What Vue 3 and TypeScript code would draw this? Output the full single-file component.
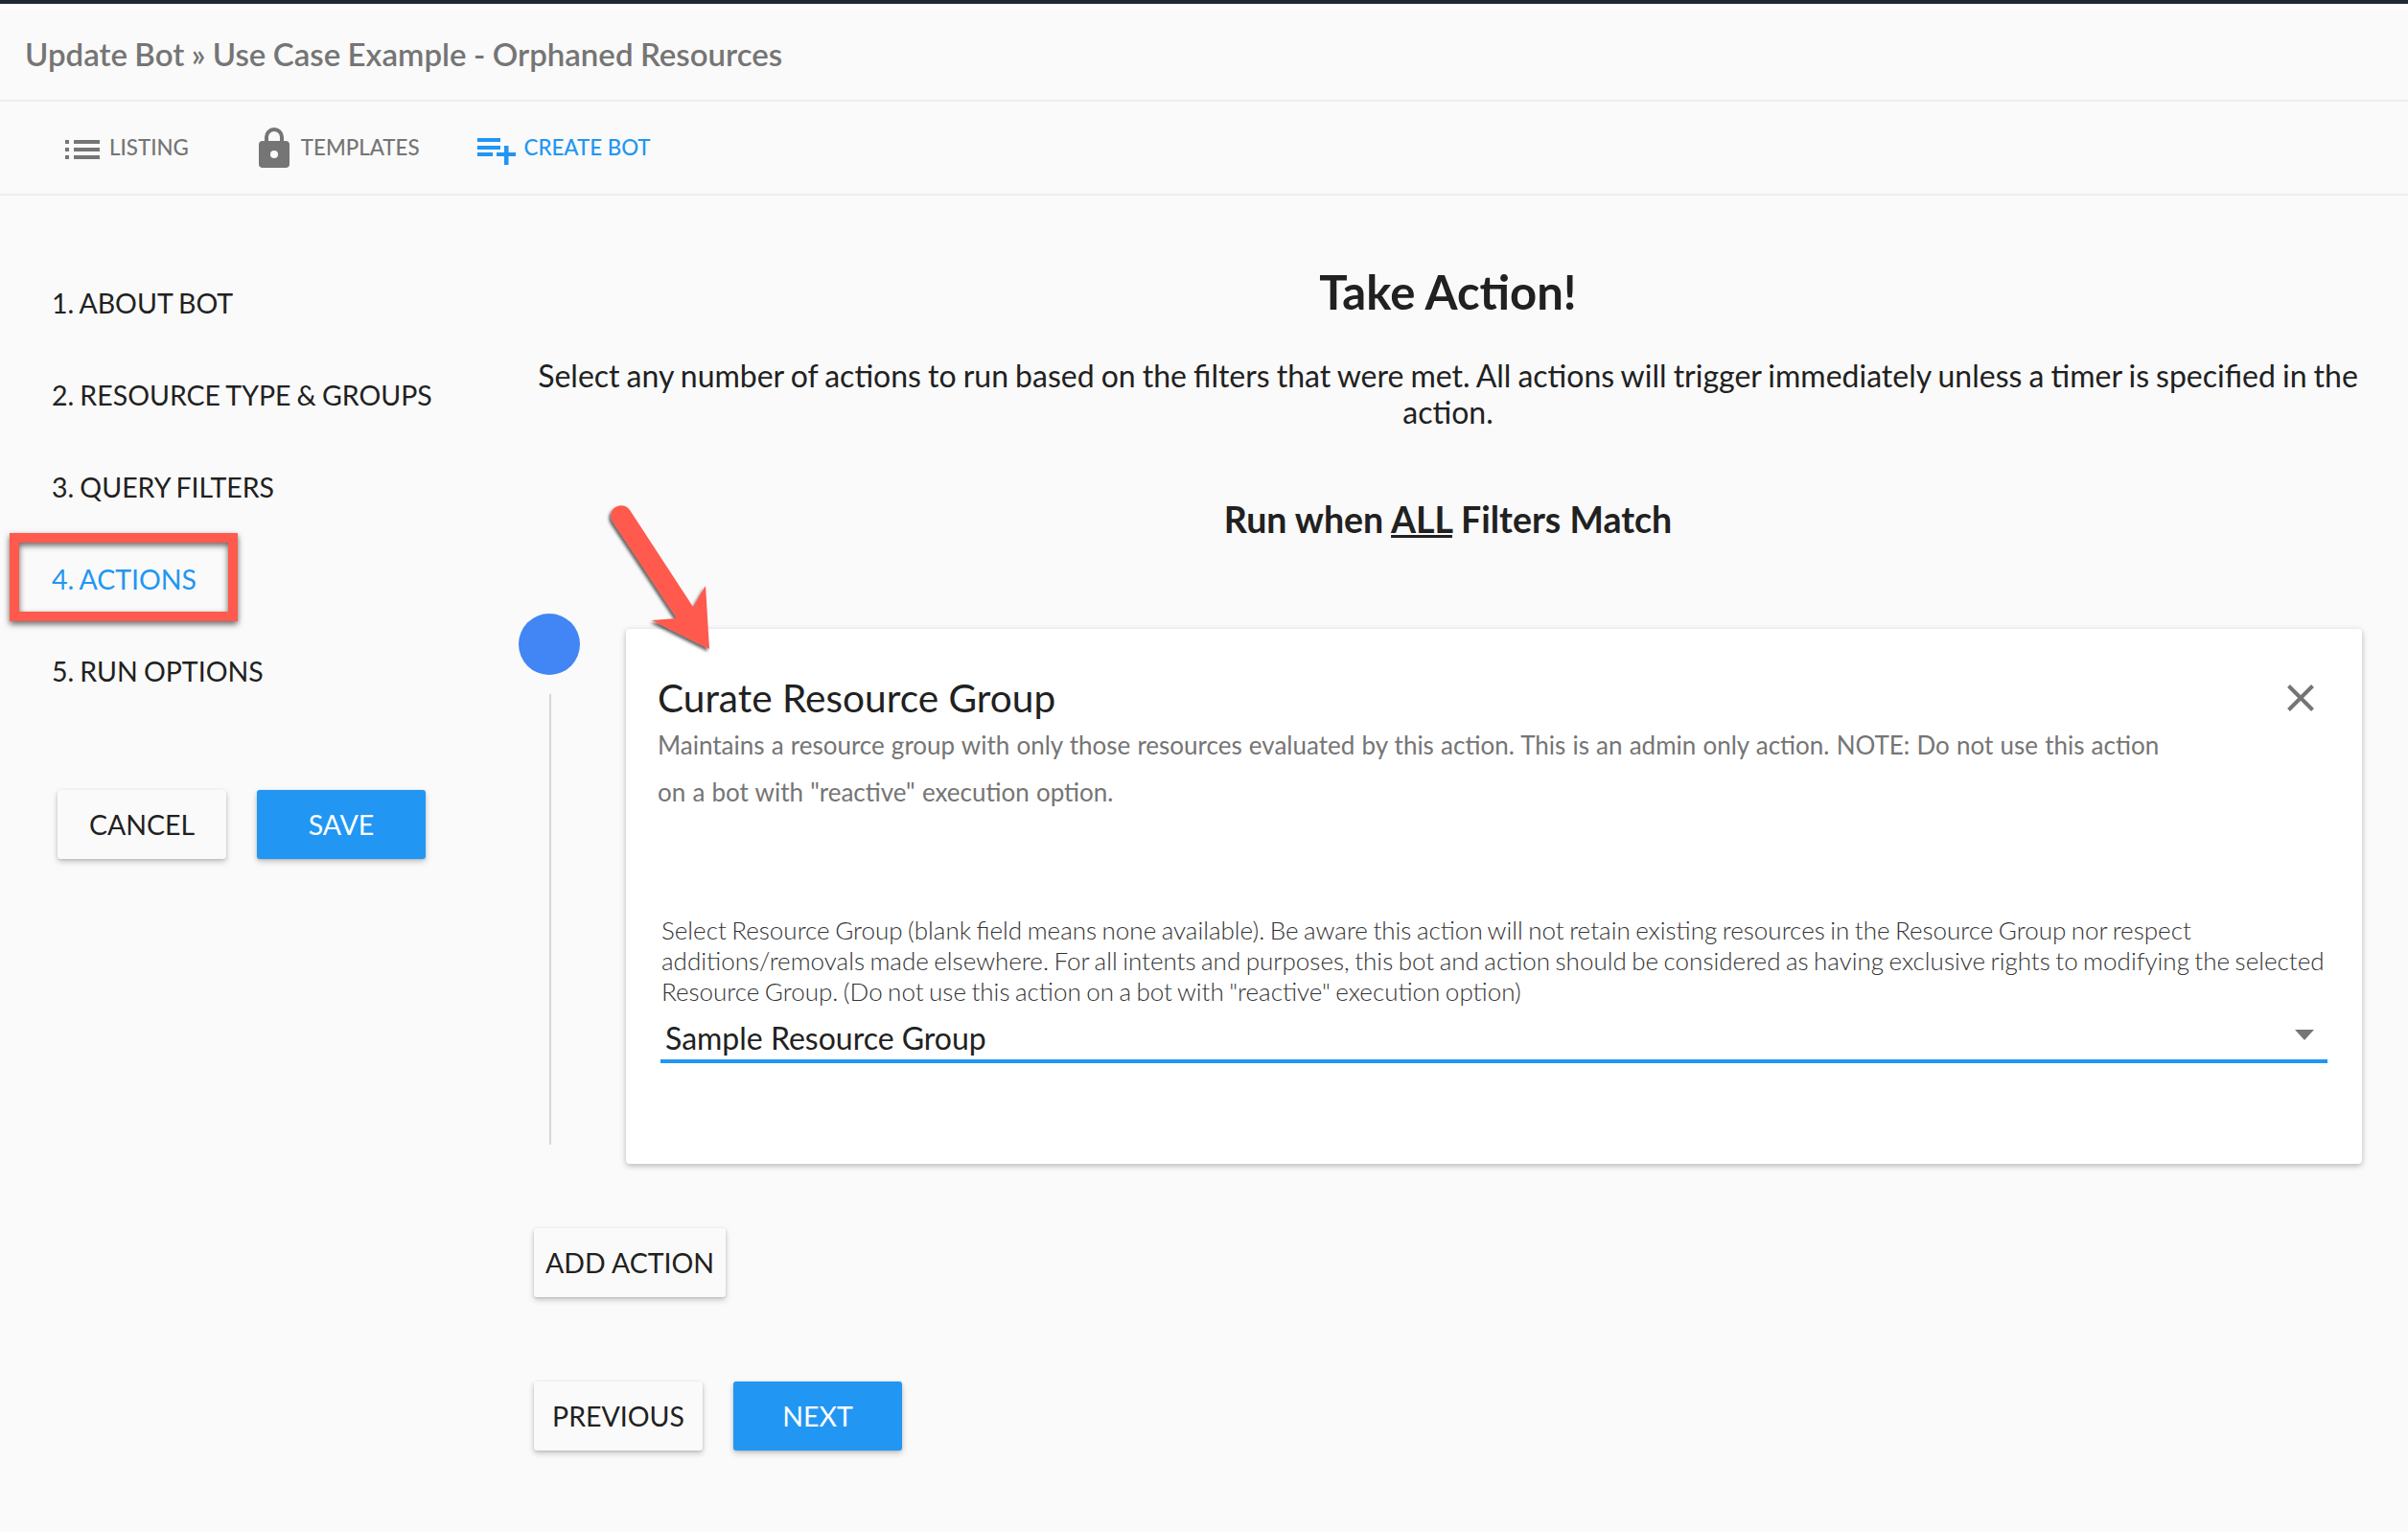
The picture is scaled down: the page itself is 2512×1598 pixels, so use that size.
<script setup lang="ts">
const steps: string[] = ['1. ABOUT BOT', '2. RESOURCE TYPE & GROUPS', '3. QUERY FILTERS', '4. ACTIONS', '5. RUN OPTIONS']
</script>

<template>
  <div class="page">
    <div class="topline"></div>
    <header class="title-bar">Update Bot » Use Case Example - Orphaned Resources</header>
    <nav class="tabs">
      <a class="tab tab-listing">
        <svg class="ic-list" width="36" height="20" viewBox="0 0 36 20" fill="#757575">
          <rect x="0" y="0" width="4" height="4" /><rect x="9" y="0" width="27" height="4" />
          <rect x="0" y="8" width="4" height="4" /><rect x="9" y="8" width="27" height="4" />
          <rect x="0" y="16" width="4" height="4" /><rect x="9" y="16" width="27" height="4" />
        </svg>
        <span class="tab-text">LISTING</span>
      </a>
      <a class="tab tab-templates">
        <svg class="ic-lock" width="32" height="42" viewBox="0 0 32 42">
          <path d="M8 17V10a8 8 0 0 1 16 0v7" fill="none" stroke="#757575" stroke-width="4" />
          <path d="M4 14h24a4 4 0 0 1 4 4v20a4 4 0 0 1-4 4H4a4 4 0 0 1-4-4V18a4 4 0 0 1 4-4z" fill="#757575" />
          <circle cx="16" cy="28" r="4" fill="#fafafa" />
        </svg>
        <span class="tab-text">TEMPLATES</span>
      </a>
      <a class="tab tab-create">
        <svg class="ic-add" width="40" height="28" viewBox="0 0 40 28" fill="#2196f3">
          <rect x="0" y="0" width="24" height="4" /><rect x="0" y="8" width="24" height="4" /><rect x="0" y="15" width="16" height="4" />
          <rect x="20" y="15" width="20" height="4" /><rect x="28" y="8" width="4.500" height="20" />
        </svg>
        <span class="tab-text">CREATE BOT</span>
      </a>
    </nav>

    <div class="body">
      <aside class="side">
        <div class="step-list">
          <div v-for="(s, i) in steps" :key="s" class="step" :class="{ active: i === 3 }">{{ s }}</div>
          <div class="step-mark"></div>
        </div>
        <div class="side-actions">
          <button class="btn">CANCEL</button>
          <button class="btn primary">SAVE</button>
        </div>
      </aside>

      <main class="main">
        <h1>Take Action!</h1>
        <p class="intro">Select any number of actions to run based on the filters that were met. All actions will trigger immediately unless a timer is specified in the action.</p>
        <h2>Run when <u>ALL</u> Filters Match</h2>

        <div class="row">
          <div class="timeline">
            <div class="dot"></div>
            <div class="line"></div>
          </div>
          <section class="card">
            <div class="card-head">
              <div class="card-title">Curate Resource Group</div>
              <svg class="close" width="28" height="28" viewBox="0 0 28 28">
                <path d="M1.500 1.500L26.500 26.500M26.500 1.500L1.500 26.500" stroke="#757575" stroke-width="4" fill="none" />
              </svg>
            </div>
            <p class="desc">Maintains a resource group with only those resources evaluated by this action. This is an admin only action. NOTE: Do not use this action on a bot with "reactive" execution option.</p>
            <div class="field">
              <div class="field-label">Select Resource Group (blank field means none available). Be aware this action will not retain existing resources in the Resource Group nor respect additions/removals made elsewhere. For all intents and purposes, this bot and action should be considered as having exclusive rights to modifying the selected Resource Group. (Do not use this action on a bot with "reactive" execution option)</div>
              <div class="select">
                <span>Sample Resource Group</span>
                <i class="caret"></i>
              </div>
            </div>
          </section>
        </div>

        <button class="btn add">ADD ACTION</button>
        <div class="pager">
          <button class="btn">PREVIOUS</button>
          <button class="btn primary">NEXT</button>
        </div>
      </main>
    </div>

    <svg class="arrow" width="140" height="190" viewBox="0 0 140 190">
      <defs>
        <filter id="arrow-shadow" x="-20%" y="-20%" width="140%" height="140%">
          <feDropShadow dx="-2" dy="2.500" stdDeviation="1.800" flood-color="#000" flood-opacity="0.6" />
        </filter>
      </defs>
      <path d="M37 22L103 123L116 101L120 167L60 137L86 135L19 34A10.800 10.800 0 0 1 37 22Z" fill="#ff5a4d" filter="url(#arrow-shadow)" />
    </svg>
  </div>
</template>

<style scoped>
.page {
  position: relative;
  width: 2512px;
  min-height: 1598px;
  background: #fafafa;
  font-family: Lato, "Liberation Sans", sans-serif;
  color: #212121;
  overflow: hidden;
}
.topline {
  height: 4px;
  background: #212b36;
  border-bottom: 6px solid #fff;
}
.title-bar {
  height: 94px;
  padding-left: 26px;
  line-height: 92px;
  font-size: 33px;
  font-weight: 600;
  word-spacing: -0.8px;
  color: #757575;
  border-bottom: 2px solid #eee;
}
.tabs {
  display: flex;
  align-items: center;
  height: 96px;
  padding-left: 68px;
  border-bottom: 2px solid #eee;
  font-size: 22.300px;
  font-weight: 500;
  color: #757575;
}
.tab { display: flex; align-items: center; }
.tab-text { margin-bottom: 2px; }
.tab-listing { gap: 10px; }
.ic-list { margin-top: 3px; }
.tab-templates { margin-left: 73px; gap: 12px; }
.tab-create { margin-left: 60px; gap: 9px; color: #2196f3; }
.ic-add { margin-top: 7px; }
.body { display: flex; }
.side { width: 557px; flex: none; padding: 64px 0 0 54px; box-sizing: border-box; }
.step-list { position: relative; }
.step { height: 96px; line-height: 96px; font-size: 28.500px; word-spacing: -1.200px; }
.step.active { color: #2196f3; }
.step-mark {
  position: absolute;
  left: -44px;
  top: 288px;
  width: 238px;
  height: 92px;
  box-sizing: border-box;
  border: 10px solid #ff5a4d;
  filter: drop-shadow(0 3px 3px rgba(0, 0, 0, 0.6));
}
.side-actions { display: flex; gap: 32px; margin: 76px 0 0 6px; }
.btn {
  width: 176px;
  height: 72px;
  padding: 0;
  border: 0;
  border-radius: 3px;
  background: #fafafa;
  color: #212121;
  font: 400 28.500px Lato, "Liberation Sans", sans-serif;
  box-shadow: 0 3px 6px rgba(0, 0, 0, 0.2), 0 1px 3px rgba(0, 0, 0, 0.12);
}
.btn.primary { background: #2196f3; color: #fff; }
.main { width: 1907px; flex: none; }
h1 {
  margin: 70px 0 0;
  font-size: 49px;
  line-height: 60px;
  font-weight: 700;
  text-align: center;
}
.intro {
  margin: 39px 0 0;
  font-size: 32px;
  line-height: 38px;
  word-spacing: -1.100px;
  text-align: center;
}
h2 {
  margin: 69px 0 0;
  font-size: 37.500px;
  line-height: 48px;
  font-weight: 700;
  text-align: center;
}
.row { display: flex; margin: 74px 0 0 -16px; }
.timeline { width: 112px; flex: none; }
.dot { width: 64px; height: 64px; border-radius: 50%; background: #4285f4; }
.line { width: 2px; height: 470px; margin: 20px 0 0 32px; background: #d6d6d6; }
.card {
  width: 1811px;
  height: 558px;
  margin-top: 16px;
  padding: 48px 36px 0 33px;
  box-sizing: border-box;
  border-radius: 4px;
  background: #fff;
  box-shadow: 0 2px 6px rgba(0, 0, 0, 0.28);
}
.card-head { display: flex; justify-content: space-between; align-items: center; }
.card-title { font-size: 40.600px; line-height: 48px; }
.close { margin-right: 14px; }
.desc {
  width: 1590px;
  margin: 1px 0 0;
  font-size: 26px;
  line-height: 49px;
  word-spacing: 0.500px;
  color: #757575;
}
.field { margin: 103px 0 0 3px; }
.field-label { margin-right: -14px; padding-left: 1px; font-size: 26px; line-height: 32px; font-weight: 300; word-spacing: -1.600px; color: #333; }
.select {
  position: relative;
  height: 59px;
  box-sizing: border-box;
  padding: 8px 0 0 5px;
  line-height: 50px;
  font-size: 32px;
  border-bottom: 4px solid #2196f3;
}
.caret {
  position: absolute;
  right: 14px;
  top: 24px;
  border-left: 10px solid transparent;
  border-right: 10px solid transparent;
  border-top: 11px solid #757575;
}
.btn.add { display: block; width: 200px; margin-top: 67px; }
.pager { display: flex; gap: 32px; margin-top: 88px; }
.arrow { position: absolute; left: 620px; top: 510px; }
</style>
